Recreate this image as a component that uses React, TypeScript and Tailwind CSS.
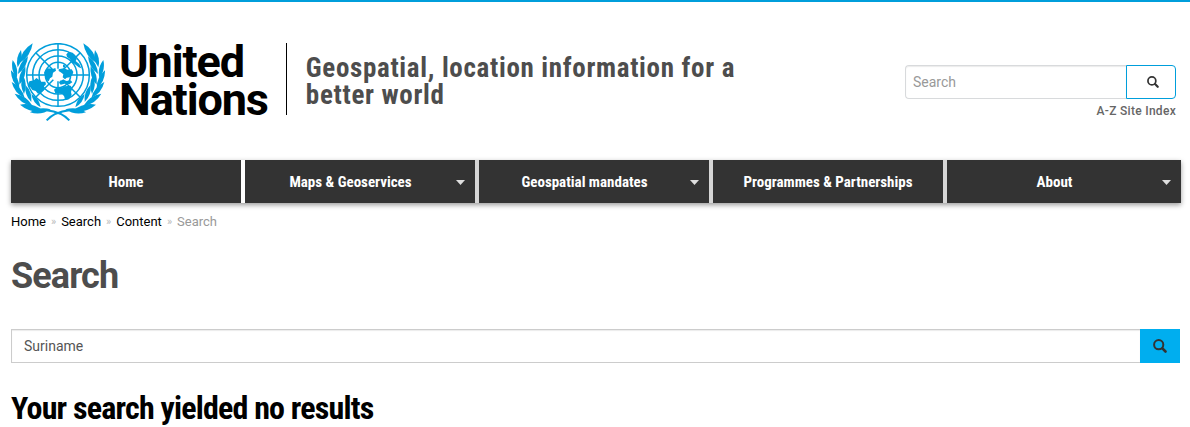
const NAV_ITEMS = [
  { label: "Home", hasMenu: false },
  { label: "Maps & Geoservices", hasMenu: true },
  { label: "Geospatial mandates", hasMenu: true },
  { label: "Programmes & Partnerships", hasMenu: false },
  { label: "About", hasMenu: true },
];

const BREADCRUMBS = ["Home", "Search", "Content"];

// Leaves of the left olive branch: base x, base y, tip x, tip y
const LEAVES = [
  [53, 112, 63, 60],
  [50, 144, 38, 90],
  [58, 176, 33, 121],
  [74, 204, 35, 156],
  [98, 228, 44, 191],
  [128, 242, 60, 224],
  [152, 238, 90, 247],
  [58, 100, 98, 40],
  [54, 132, 84, 78],
  [58, 164, 76, 108],
  [72, 192, 69, 136],
  [94, 216, 76, 164],
  [122, 232, 94, 192],
];

function leafPath([bx, by, tx, ty]: number[]) {
  const mx = (bx + tx) / 2;
  const my = (by + ty) / 2;
  const nx = (by - ty) * 0.24;
  const ny = (tx - bx) * 0.24;
  return `M${bx} ${by}Q${mx + nx} ${my + ny} ${tx} ${ty}Q${mx - nx} ${my - ny} ${bx} ${by}Z`;
}

function Branch() {
  return (
    <g>
      {LEAVES.map((leaf) => (
        <path key={leaf.join("-")} d={leafPath(leaf)} />
      ))}
      <path
        d="M208 271C190 252 166 244 140 241"
        fill="none"
        stroke="currentColor"
        strokeWidth={6}
      />
    </g>
  );
}

function Emblem() {
  return (
    <svg
      viewBox="33 39 282 234"
      className="h-[78px] w-[94px] text-[#009edb]"
      fill="currentColor"
      aria-hidden="true"
    >
      <g fill="none" stroke="currentColor" strokeWidth={4.5}>
        <circle cx={174} cy={135} r={94} />
        <circle cx={174} cy={135} r={76} />
        <circle cx={174} cy={135} r={57} />
        <circle cx={174} cy={135} r={38} />
        <path d="M174 41V116M174 154V229M80 135H155M193 135H268M108 69L160 121M188 149L240 201M240 69L188 121M160 149L108 201" />
      </g>
      {/* Continents */}
      <path d="M132 128l4-9 10-4 12 2 8-3 2 8-9 6-2 12-7 5-4 9-7-3-3-9z" />
      <path d="M88 154l14-3 7-7 8 5 7 6 12 0 2 8-6 6 1 10-8 8-11 4-7-8-10-3-6-8-8-4z" />
      <path d="M176 118l15-3 12 4 12-1 5 8-3 9-8 7-9 1-5 5-7-6 2-9-8-6-6-4z" />
      <path d="M162 179l9-7 14 1 8-4 19-2 5 8-4 11 2 9-8 13-11 3-4-13-9-9-17 1z" />
      <path d="M206 66l12 2 8 8 4 12-3 5 11 9 6 13-8-3-13-11-10-5-3-9-9-6-2-8z" />
      <path d="M189 104l6 2v7l-6-1z" />
      <path d="M180 152l10-3 10 4 12-2 5 6-9 6-14-2-12 3-5-6z" />
      <Branch />
      <g transform="matrix(-1 0 0 1 348 0)">
        <Branch />
      </g>
    </svg>
  );
}

function SearchIcon({ className }: { className: string }) {
  return (
    <svg viewBox="0 0 14 14" className={className} fill="none" aria-hidden="true">
      <circle cx={5.7} cy={5.7} r={4.6} stroke="currentColor" strokeWidth={2} />
      <path
        d="M9.4 9.4L12.5 12.5"
        stroke="currentColor"
        strokeWidth={2.6}
        strokeLinecap="round"
      />
    </svg>
  );
}

function Header() {
  return (
    <header className="flex items-start justify-between pt-[41px] pr-1 pb-[39px]">
      <div className="flex items-start">
        <a href="#" className="flex items-start">
          <Emblem />
          <span className="ml-[14px] text-[45px] leading-[38px] font-bold tracking-tight text-black">
            <span className="block">United</span>
            <span className="block">Nations</span>
          </span>
        </a>
        <div className="ml-[18px] h-[72px] border-l border-black" />
        <p className="mt-3 ml-[19px] max-w-[450px] font-['Roboto_Condensed','Roboto',sans-serif] text-[27px] leading-[27px] font-bold tracking-wide text-[#4d4d4d]">
          Geospatial, location information for a better world
        </p>
      </div>
      <div className="flex flex-col items-end pt-[22px]">
        <form className="flex h-[34px]" role="search">
          <input
            type="text"
            placeholder="Search"
            aria-label="Search this site"
            className="w-[221px] rounded-l border border-r-0 border-[#d8dadc] px-[7px] text-sm shadow-[inset_0_1px_1px_rgba(0,0,0,0.08)] placeholder:text-[#999]"
          />
          <button
            type="button"
            aria-label="Search"
            className="flex w-[50px] items-center justify-center rounded-r border border-[#009edb] pl-1 text-[#333]"
          >
            <SearchIcon className="size-3" />
          </button>
        </form>
        <a href="#" className="mt-1 text-xs leading-4 font-medium tracking-wide text-[#666]">
          A-Z Site Index
        </a>
      </div>
    </header>
  );
}

function MainNav() {
  return (
    <nav className="-mr-px bg-[#d6d6d6] font-['Roboto_Condensed','Roboto',sans-serif] shadow-[0_2px_5px_rgba(0,0,0,0.4)]">
      <ul className="grid grid-cols-5">
        {NAV_ITEMS.map((item) => (
          <li
            key={item.label}
            className="border-r-4 border-[#d6d6d6] first:border-white last:border-r-0"
          >
            <a
              href="#"
              className="flex h-[43px] items-center bg-[#333] pt-px text-[15px] font-bold whitespace-nowrap text-white"
            >
              <span className="flex-1 text-center">{item.label}</span>
              {item.hasMenu && (
                <svg viewBox="0 0 9 5" className="mr-[10px] h-[5px] w-[9px]" aria-hidden="true">
                  <path d="M0 0H9L4.5 5Z" fill="#dfdfdf" />
                </svg>
              )}
            </a>
          </li>
        ))}
      </ul>
    </nav>
  );
}

export default function App() {
  return (
    <div className="border-t-2 border-[#009edb] bg-white pr-[10px] pl-[11px] font-['Roboto',sans-serif]">
      <Header />
      <MainNav />

      <nav aria-label="Breadcrumb" className="mt-[9px]">
        <ol className="flex text-[13px] leading-5 text-black">
          {BREADCRUMBS.map((crumb) => (
            <li key={crumb} className="flex">
              <a href="#">{crumb}</a>
              <span className="px-[5px] text-[11px] text-[#bbb]">»</span>
            </li>
          ))}
          <li className="text-[#999]">Search</li>
        </ol>
      </nav>

      <main>
        <h1 className="mt-6 text-4xl leading-10 font-bold tracking-tight text-[#4d4d4d]">
          Search
        </h1>
        <form className="mt-[33px] flex h-[34px]" role="search">
          <input
            type="text"
            defaultValue="Suriname"
            aria-label="Enter your keywords"
            className="min-w-0 flex-1 border border-r-0 border-[#ccc] px-3 text-sm text-[#555] shadow-[inset_0_1px_1px_rgba(0,0,0,0.08)]"
          />
          <button
            type="button"
            aria-label="Search"
            className="flex w-10 items-center justify-center bg-[#00aeef] text-[#333]"
          >
            <SearchIcon className="size-[14px]" />
          </button>
        </form>
        <h2 className="mt-[27px] font-['Roboto_Condensed','Roboto',sans-serif] text-[32px] leading-9 font-bold tracking-tight text-black">
          Your search yielded no results
        </h2>
      </main>
    </div>
  );
}
